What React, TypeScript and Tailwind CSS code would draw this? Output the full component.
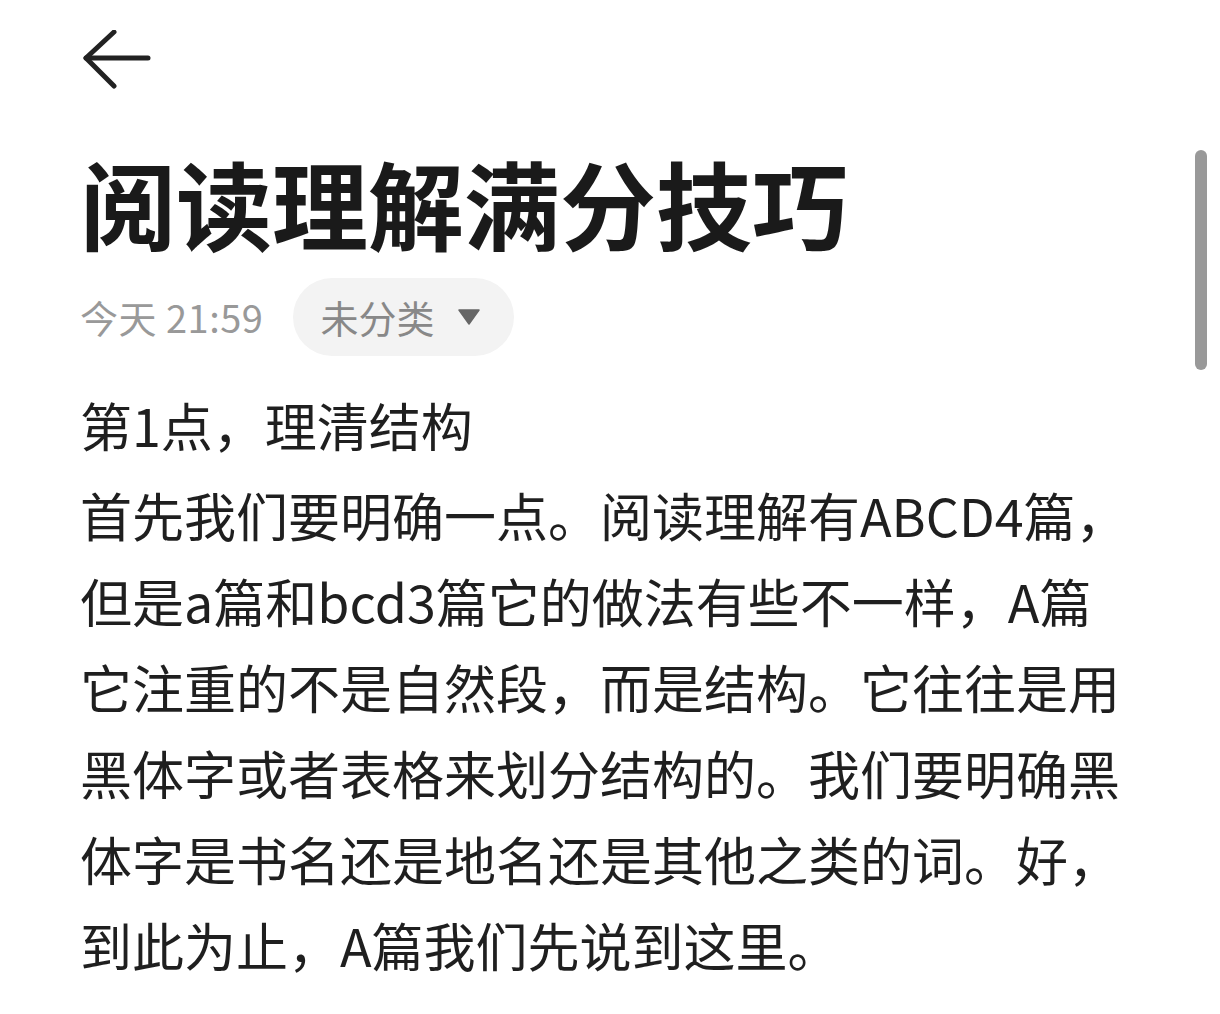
import React from 'react'

const font = { fontFamily: '"Noto Sans CJK SC", "Noto Sans", sans-serif' }

const lines = [
  '首先我们要明确一点。阅读理解有ABCD4篇，但是a篇和bcd3篇它的做法有些不一样，A篇它注重的不是自然段，而是结构。它往往是用黑体字或者表格来划分结构的。我们要明确黑体字是书名还是地名还是其他之类的词。好，到此为止，A篇我们先说到这里。',
]

function BackArrow() {
  return (
    <svg width="70" height="64" viewBox="0 0 70 64" fill="none" className="text-[#222]">
      <path d="M4 28 H66" stroke="currentColor" strokeWidth="5" strokeLinecap="round" />
      <path d="M32 2 L4 28 L32 56" stroke="currentColor" strokeWidth="5" strokeLinecap="round" strokeLinejoin="round" />
    </svg>
  )
}

export default function App() {
  return (
    <div className="relative h-[1014px] w-[1220px] overflow-hidden bg-white" style={font}>
      {/* scrollbar */}
      <div className="absolute left-[1195px] top-[150px] h-[220px] w-[12px] rounded-full bg-[#999]" />

      <div className="pl-[82px] pt-[30px]">
        <BackArrow />
      </div>

      <div className="w-[1130px] pl-[80px]">
        <h1 className="mt-[50px] text-[96px] font-semibold leading-[1.2] text-[#1a1a1a]">阅读理解满分技巧</h1>

        <div className="mt-[19px] flex items-center">
          <span className="text-[38px] leading-none tracking-[0.5px] text-[#999]">今天 21:59</span>
          <div className="ml-[30px] flex h-[78px] w-[221px] items-center gap-[24px] rounded-full bg-[#f3f3f3] pl-[27px]">
            <span className="text-[38px] leading-none text-[#888]">未分类</span>
            <svg width="22" height="16" viewBox="0 0 22 16">
              <path d="M1 1 H21 L11 15 Z" fill="#666" strokeLinejoin="round" stroke="#666" strokeWidth="1.5" />
            </svg>
          </div>
        </div>

        <div className="mt-[26px] text-[52px] leading-[86px] text-[#1f1f1f]">
          <p className="mb-[4px]">第1点，理清结构</p>
          {lines.map((t) => (
            <p key={t}>{t}</p>
          ))}
        </div>
      </div>
    </div>
  )
}
